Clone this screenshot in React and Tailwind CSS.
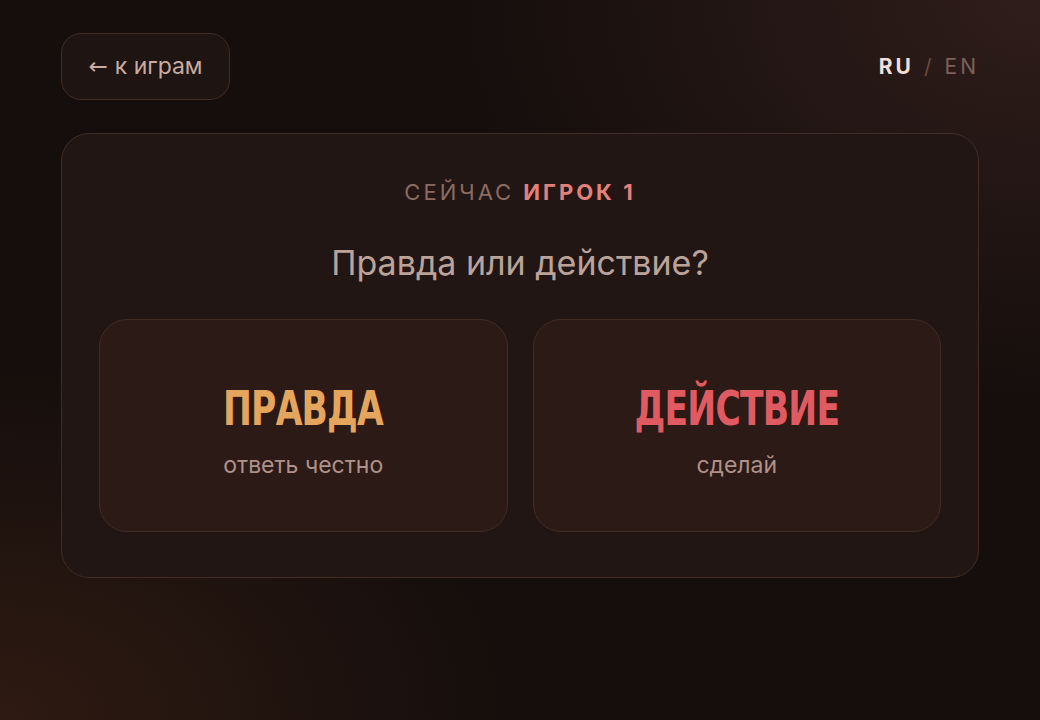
const bodyFont = { fontFamily: 'Inter, "Noto Sans", sans-serif' }

function ChoiceCard({ title, hint, color }) {
  return (
    <button className="flex h-[213px] flex-col items-center justify-center rounded-[28px] border border-[#432c24] bg-[#2b1a16] pt-[12px]">
      <span
        className={`font-['DejaVu_Sans_Condensed','DejaVu_Sans',sans-serif] font-stretch-condensed text-[48px] font-bold leading-none tracking-[-1px] scale-x-[0.8] ${color}`}
      >
        {title}
      </span>
      <span className="mt-[18px] text-[23px] leading-[30px] text-[#b09189]">{hint}</span>
    </button>
  )
}

export default function App() {
  return (
    <div
      style={bodyFont}
      className="min-h-[720px] w-full bg-[#150e0c] bg-[radial-gradient(ellipse_at_100%_0%,#2f1d1a_0%,transparent_40%),radial-gradient(ellipse_at_0%_100%,#2e1a12_0%,transparent_35%)] px-[61px] pt-[33px]"
    >
      <header className="flex items-center justify-between">
        <button className="flex h-[67px] w-[169px] items-center justify-center rounded-[20px] border border-[#432c24] bg-[#1e1411] text-[23px] text-[#c9aba1]">
          <span className="font-['DejaVu_Sans',sans-serif]">←</span>
          <span className="ml-[7px]">к играм</span>
        </button>
        <div className="flex items-center gap-[10px] text-[21px] tracking-[3px]">
          <span className="font-bold text-[#f0dfd8]">RU</span>
          <span className="text-[#6a4a40]">/</span>
          <span className="text-[#7d6059]">EN</span>
        </div>
      </header>

      <main className="mt-[33px] rounded-[28px] border border-[#432c24] bg-[#211613] px-[37px] pb-[45px] pt-[42px]">
        <p className="text-center text-[22px] leading-[33px] tracking-[3px] text-[#8b6b62]">
          СЕЙЧАС <span className="font-bold text-[#e3807a]">ИГРОК 1</span>
        </p>
        <h1 className="mt-[28px] text-center text-[34px] leading-[51px] text-[#bca39a]">Правда или действие?</h1>
        <div className="mt-[31px] grid grid-cols-2 gap-[25px]">
          <ChoiceCard title="ПРАВДА" hint="ответь честно" color="text-[#e5a55d]" />
          <ChoiceCard title="ДЕЙСТВИЕ" hint="сделай" color="text-[#e05a62]" />
        </div>
      </main>
    </div>
  )
}
